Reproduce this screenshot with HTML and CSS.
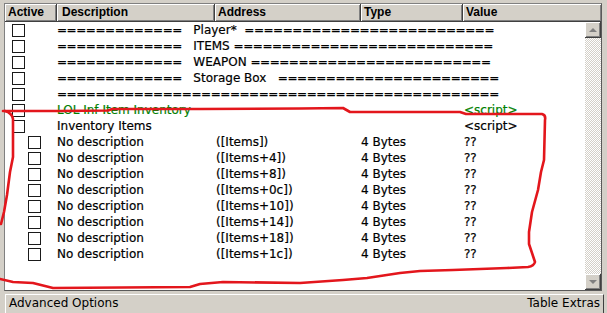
FILE: index.html
```html
<!DOCTYPE html>
<html>
<head>
<meta charset="utf-8">
<link rel="stylesheet" href="styles.css">
</head>
<body>
<div class="window">
  <div class="list">
    <div class="header">
      <div class="hcell c-active">Active</div>
      <div class="hcell c-desc">Description</div>
      <div class="hcell c-addr">Address</div>
      <div class="hcell c-type">Type</div>
      <div class="hcell c-value">Value</div>
    </div>
    <div class="body">
      <div class="rows">
        <div class="row"><span class="cb"></span><span class="sep"><span class="eq">=============</span>   Player*  <span class="eq">==========================</span></span></div>
        <div class="row"><span class="cb"></span><span class="sep"><span class="eq">=============</span>   ITEMS <span class="eq">===========================</span></span></div>
        <div class="row"><span class="cb"></span><span class="sep"><span class="eq">=============</span>   WEAPON <span class="eq">=========================</span></span></div>
        <div class="row"><span class="cb"></span><span class="sep"><span class="eq">=============</span>   Storage Box   <span class="eq">=======================</span></span></div>
        <div class="row"><span class="cb"></span><span class="sep"><span class="eq">==============================================</span></span></div>
        <div class="row green"><span class="cb"></span><span class="desc">LOL Inf Item Inventory</span><span></span><span></span><span class="val">&lt;script&gt;</span></div>
        <div class="row"><span class="cb"></span><span class="desc">Inventory Items</span><span></span><span></span><span class="val">&lt;script&gt;</span></div>
        <div class="row child"><span class="cb"></span><span class="desc">No description</span><span>([Items])</span><span>4 Bytes</span><span class="val">??</span></div>
        <div class="row child"><span class="cb"></span><span class="desc">No description</span><span>([Items+4])</span><span>4 Bytes</span><span class="val">??</span></div>
        <div class="row child"><span class="cb"></span><span class="desc">No description</span><span>([Items+8])</span><span>4 Bytes</span><span class="val">??</span></div>
        <div class="row child"><span class="cb"></span><span class="desc">No description</span><span>([Items+0c])</span><span>4 Bytes</span><span class="val">??</span></div>
        <div class="row child"><span class="cb"></span><span class="desc">No description</span><span>([Items+10])</span><span>4 Bytes</span><span class="val">??</span></div>
        <div class="row child"><span class="cb"></span><span class="desc">No description</span><span>([Items+14])</span><span>4 Bytes</span><span class="val">??</span></div>
        <div class="row child"><span class="cb"></span><span class="desc">No description</span><span>([Items+18])</span><span>4 Bytes</span><span class="val">??</span></div>
        <div class="row child"><span class="cb"></span><span class="desc">No description</span><span>([Items+1c])</span><span>4 Bytes</span><span class="val">??</span></div>
      </div>
      <div class="scrollbar">
        <div class="sbtn"><svg width="14" height="14" viewBox="0 0 14 14"><path d="M3 9 L7 5 L11 9 Z" fill="#808080"/></svg></div>
        <div class="track"></div>
        <div class="sbtn"><svg width="14" height="14" viewBox="0 0 14 14"><path d="M3 5 L11 5 L7 9 Z" fill="#808080"/></svg></div>
      </div>
    </div>
  </div>
  <div class="bottom">
    <span>Advanced Options</span>
    <span>Table Extras</span>
  </div>
  <svg class="scribble" width="607" height="313" viewBox="0 0 607 313">
    <path d="M3 111 L60 111 L108 110.5 L112 109 L200 109 L300 108.5 L343 108 L350 112 L460 112 L466 114 L542 114 Q546 115 545 120 L544 160 L541 172 L538 190 L532 212 L529 232 L529 244 L533 256 L535 262 Q534 266 528 267 L507 268 L453 270 L420 271 L400 273 L367 278 L343 280 L300 283 L223 282 L200 284 L190 287 L53 288 L33 283 L13 282 L0 279" fill="none" stroke="#e3161c" stroke-width="2.6" stroke-linejoin="round" stroke-linecap="round"/>
    <path d="M5 111 Q12 113 13 119 L13 157 L10 172 L7 195 L4 212 L1 224" fill="none" stroke="#e3161c" stroke-width="2.6" stroke-linejoin="round" stroke-linecap="round"/>
  </svg>
</div>
</body>
</html>
```

FILE: styles.css
```css
html, body {
  margin: 0;
  padding: 0;
}
body {
  background: #d4d0c8;
  width: 607px;
  height: 313px;
  overflow: hidden;
}
.window {
  position: relative;
  width: 607px;
  height: 313px;
  display: flex;
  flex-direction: column;
}
.list {
  margin: 3px 0 0 4px;
  width: 596px;
  height: 286px;
  border: 1px solid #808080;
  border-right-color: #5a5a5a;
  border-bottom-color: #5a5a5a;
  background: #fff;
  display: flex;
  flex-direction: column;
}
.header {
  display: flex;
  height: 18px;
  flex: none;
  font-family: "Liberation Sans", Arial, sans-serif;
  font-weight: bold;
  font-size: 12px;
  color: #000;
}
.hcell {
  box-sizing: border-box;
  height: 18px;
  line-height: 17px;
  padding-left: 3px;
  background: #d4d0c8;
  border-right: 1px solid #404040;
  border-bottom: 1px solid #404040;
  box-shadow: inset 1px 1px 0 #fff, inset -1px -1px 0 #808080;
  white-space: nowrap;
  overflow: hidden;
}
.c-active { width: 52px; }
.c-desc { width: 158px; padding-left: 5px; }
.c-addr { width: 146px; }
.c-type { width: 102px; }
.c-value { flex: 1; border-right: none; }
.body {
  flex: 1;
  display: flex;
  min-height: 0;
}
.rows {
  flex: 1;
  font-family: "DejaVu Sans", Verdana, sans-serif;
  font-size: 12px;
  color: #000;
  -webkit-text-stroke: 0.2px currentColor;
  overflow: hidden;
}
.row {
  display: grid;
  grid-template-columns: 52px 159px 145px 103px 1fr;
  height: 16px;
  line-height: 16px;
  white-space: pre;
}
.row > span { overflow: visible; }
.cb {
  box-sizing: border-box;
  width: 13px;
  height: 13px;
  margin: 2px 0 0 7px;
  border: 1px solid #1a1a1a;
  background: #fff;
  -webkit-text-stroke: 0;
}
.child .cb { margin-left: 23px; }
.sep { grid-column: 2 / 6; }
.eq { letter-spacing: -0.45px; }
.green { color: #008000; }
.val { padding-left: 0; }
.scrollbar {
  width: 16px;
  flex: none;
  display: flex;
  flex-direction: column;
}
.sbtn {
  box-sizing: border-box;
  width: 16px;
  height: 16px;
  background: #d4d0c8;
  border-right: 1px solid #404040;
  border-bottom: 1px solid #404040;
  box-shadow: inset 1px 1px 0 #fff, inset -1px -1px 0 #808080;
  display: flex;
  align-items: center;
  justify-content: center;
}
.track {
  flex: 1;
  background: repeating-conic-gradient(#fff 0 25%, #d4d0c8 0 50%) 0 0 / 2px 2px;
}
.bottom {
  margin: 3px 3px 0 5px;
  flex: 1;
  display: flex;
  justify-content: space-between;
  align-items: flex-start;
  padding: 1px 3px 0 3px;
  border-top: 1px solid #fff;
  border-left: 1px solid #fff;
  border-right: 1px solid #404040;
  font-family: "DejaVu Sans", Verdana, sans-serif;
  font-size: 12px;
  line-height: 15px;
  color: #000;
}
.scribble {
  position: absolute;
  left: 0;
  top: 0;
  pointer-events: none;
}
```
